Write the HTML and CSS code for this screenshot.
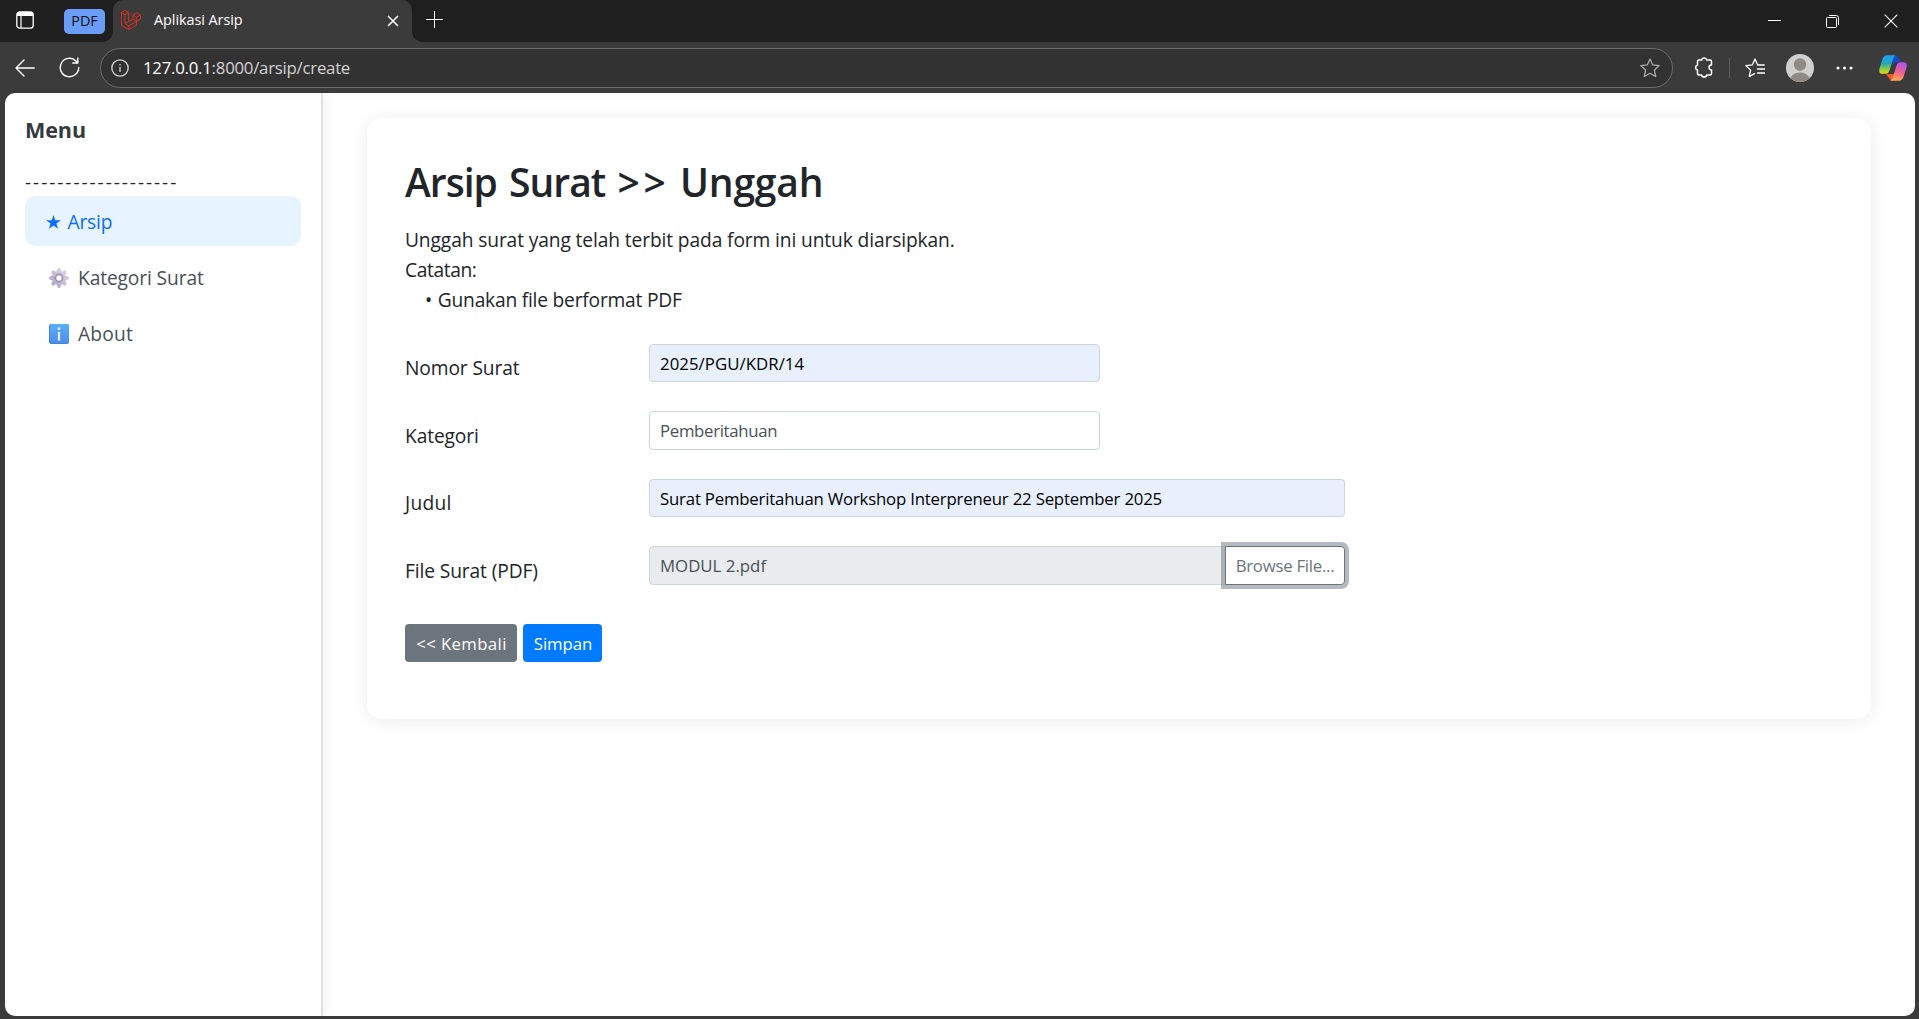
FILE: index.html
```
<!DOCTYPE html>
<html lang="id">
<head>
<meta charset="utf-8">
<title>Aplikasi Arsip</title>
<link rel="stylesheet" href="styles.css">
</head>
<body>
<div class="window">
  <header class="tabbar">
    <svg class="workspace" width="18" height="18" viewBox="0 0 18 18"><rect x=".8" y=".8" width="16.4" height="16.4" rx="3" fill="none" stroke="#fff" stroke-width="1.3"/><path d="M1 5V3.5A2.7 2.7 0 0 1 3.5 1h11A2.700 2.700 0 0 1 17 3.500V5z" fill="#fff"/><path d="M5 5v12" stroke="#fff" stroke-width="1.200"/></svg>
    <span class="group-chip">PDF</span>
    <div class="tab">
      <svg class="favicon" width="20" height="20" viewBox="0 0 20 20" fill="none" stroke="#d93025" stroke-width="1" stroke-linejoin="round"><path d="M.5 2.500 4 .5l3.700 2L4 4.600zM.5 2.500v13L8 19.500l7.500-4.200v-4M4 4.600v8.900l4 2.300v3.700M7.700 2.500v8.800M12 5l3.700-2.200L19.500 5l-3.800 2.200zM12 5v4.100l3.700 2.200L19.500 9V5M15.700 7.200v4.100M4 13.500l8-4.400M8 15.800l7.700-4.500"/></svg>
      <span class="tab-title">Aplikasi Arsip</span>
      <svg class="tab-close" width="12" height="12" viewBox="0 0 12 12" stroke="#fff" stroke-width="1.500"><path d="m1 1 10 10M11 1 1 11"/></svg>
    </div>
    <svg class="new-tab" width="17" height="17" viewBox="0 0 17 17" stroke="#fff" stroke-width="1"><path d="M8.500 0v17M0 8.500h17"/></svg>
    <div class="controls">
      <svg width="13" height="14" viewBox="0 0 13 14"><path d="M0 6.500h13" stroke="#fff" stroke-width="1"/></svg>
      <svg width="13" height="14" viewBox="0 0 13 14" fill="none" stroke="#fff"><rect x=".5" y="3.500" width="10" height="10" rx="1"/><path d="M3 1.500h7.200a2.300 2.300 0 0 1 2.300 2.300v7.200"/></svg>
      <svg width="14" height="14" viewBox="0 0 14 14" stroke="#fff" stroke-width="1.100"><path d="m.7.7 12.600 12.600M13.300.7.7 13.300"/></svg>
    </div>
  </header>

  <nav class="toolbar">
    <svg class="back" width="20" height="18" viewBox="0 0 20 18" fill="none" stroke="#fff" stroke-width="1.400" stroke-linecap="round" stroke-linejoin="round"><path d="M19.200 9H1M9 1 1 9l8 8"/></svg>
    <svg class="reload" width="21" height="21" viewBox="0 0 21 21" fill="none" stroke="#fff" stroke-width="1.400" stroke-linecap="round" stroke-linejoin="round"><path d="M19.700 10.500a9.200 9.200 0 1 1-2.800-6.600l1.800 1.800M18.800 1v5h-5"/></svg>
    <div class="address">
      <svg width="18" height="18" viewBox="0 0 18 18" fill="none" stroke="#d6d6d6" stroke-width="1.300"><circle cx="9" cy="9" r="8.200"/><path d="M9 8v5"/><path d="M9 5v1.600"/></svg>
      <span class="url">127.0.0.1<span class="url-path">:8000/arsip/create</span></span>
      <svg class="bookmark" width="20" height="20" viewBox="0 0 20 20" fill="none" stroke="#a9a9a9" stroke-width="1.300" stroke-linejoin="round"><path d="m10 1 2.700 5.900 6.500.7-4.800 4.400 1.300 6.500L10 15.300l-5.700 3.200L5.600 12 .8 7.600l6.500-.7z"/></svg>
    </div>
    <svg class="extensions" width="20" height="21" viewBox="0 0 20 21" fill="none" stroke="#fff" stroke-width="1.500" stroke-linejoin="round"><path d="M3.500 4.500Q3.500 3 5 3h2.600a2.600 2.600 0 0 1 5.100 0H16Q17.500 3 17.500 4.500V8a2.500 2.500 0 1 0 0 5v3.500Q17.500 18 16 18h-3.300a2.600 2.600 0 0 1-5.100 0H5q-1.500 0-1.500-1.500V13a2.600 2.600 0 0 1 0-5z"/></svg>
    <span class="divider"></span>
    <svg class="favorites" width="20" height="20" viewBox="0 0 20 20" fill="none" stroke="#fff" stroke-width="1.300" stroke-linecap="round" stroke-linejoin="round"><path d="M19.200 7h-6.500L10 1 7.300 6.900.8 7.600l4.800 4.500-1.300 6.400 5.200-2.900M12.500 11h7M12.500 15h7"/></svg>
    <svg class="avatar" width="28" height="28" viewBox="0 0 28 28"><clipPath id="disc"><circle cx="14" cy="14" r="14"/></clipPath><g clip-path="url(#disc)"><rect width="28" height="28" fill="#d2d0ce"/><circle cx="14" cy="10.500" r="6.200" fill="#8f8a86"/><ellipse cx="14" cy="26" rx="10" ry="7.500" fill="#8f8a86"/></g></svg>
    <svg class="more" width="17" height="4" viewBox="0 0 17 4" fill="#fff"><circle cx="2" cy="2" r="1.500"/><circle cx="8.500" cy="2" r="1.500"/><circle cx="15" cy="2" r="1.500"/></svg>
    <svg class="copilot" width="28" height="26" viewBox="0 0 28 26">
      <defs>
        <linearGradient id="cool" x1="0" y1="0" x2="0" y2="1"><stop offset="0" stop-color="#18a0f5"/><stop offset=".45" stop-color="#2aa5b8"/><stop offset=".75" stop-color="#8ccf45"/><stop offset="1" stop-color="#f5d30a"/></linearGradient>
        <linearGradient id="warm" x1=".6" y1="0" x2=".3" y2="1"><stop offset="0" stop-color="#b255ee"/><stop offset=".5" stop-color="#f2608c"/><stop offset="1" stop-color="#ffb04d"/></linearGradient>
      </defs>
      <path d="M13 .5h3.500q2.500 0 3.300 2.700l1.200 4h-3q-3 0-4 3z" fill="#1749c8"/>
      <path d="M7 19h8l2 6.300h-3.500q-3 0-4-3z" fill="#f4582c"/>
      <path d="M8 .3h9q-2 .7-3 4l-3.500 11q-1 3.500-4 3.500H3.500Q-.8 18.800.5 13.500l2.800-9Q4.700.3 8 .3z" fill="url(#cool)"/>
      <path d="M20 25.700h-9q2-.7 3-4l3.500-11q1-3.500 4-3.500h3q4.300 0 3 5.300l-2.800 9q-1.400 4.200-4.700 4.200z" fill="url(#warm)"/>
    </svg>
  </nav>

  <div class="page">
    <aside class="sidebar">
      <h2 class="menu-title">Menu</h2>
      <div class="rule">-------------------</div>
      <a class="item active"><svg width="15" height="14" viewBox="0 0 15 14"><path d="m7.500 0 1.800 5.200H15l-4.600 3.300 1.700 5.300-4.600-3.300-4.600 3.300 1.700-5.300L0 5.200h5.700z" fill="#0d6efd"/></svg><span class="t-arsip">Arsip</span></a>
      <a class="item"><svg width="20" height="20" viewBox="0 0 20 20"><defs><linearGradient id="gear" x1="1" y1="0" x2="0" y2="1"><stop offset="0" stop-color="#ded6e8"/><stop offset="1" stop-color="#b3a3c9"/></linearGradient></defs><g stroke="url(#gear)" stroke-width="3.800" stroke-linecap="round"><path d="M10 2v16.010M2 10h16.010M4.300 4.300l11.400 11.410M15.700 4.300 4.300 15.710"/></g><circle cx="10" cy="10" r="7.300" fill="url(#gear)"/><circle cx="10" cy="10" r="4.400" fill="#9d93a8"/><circle cx="10" cy="10" r="2.700" fill="#fff"/></svg><span class="t-kat">Kategori Surat</span></a>
      <a class="item"><svg width="20" height="20" viewBox="0 0 20 20"><defs><linearGradient id="info" x1="0" y1="0" x2="0" y2="1"><stop offset="0" stop-color="#58b0fa"/><stop offset="1" stop-color="#4a8ee8"/></linearGradient></defs><rect width="20" height="20" rx="2" fill="#4583d2"/><rect x="1" width="19" height="19" rx="2" fill="url(#info)"/><path d="M10 8v8.500" stroke="#f3e8ff" stroke-width="2.200"/><circle cx="10" cy="4.700" r="1.400" fill="#f3e8ff"/></svg><span class="t-about">About</span></a>
    </aside>

    <main class="content">
      <section class="card">
        <h1>Arsip Surat <span class="arrows">&gt;&gt;</span> <span class="last">Unggah</span></h1>
        <p class="lead">Unggah surat yang telah terbit pada form ini untuk diarsipkan.</p>
        <p class="note">Catatan:</p>
        <p class="bullet">• <span>Gunakan file berformat PDF</span></p>
        <form class="form">
          <div class="row"><label>Nomor Surat</label><div class="field short filled"><span class="v-no">2025/PGU/KDR/14</span></div></div>
          <div class="row"><label>Kategori</label><div class="field short"><span class="v-kat">Pemberitahuan</span></div></div>
          <div class="row"><label class="l-judul">Judul</label><div class="field filled"><span class="v-judul">Surat Pemberitahuan Workshop Interpreneur 22 September 2025</span></div></div>
          <div class="row"><label>File Surat (PDF)</label><div class="group"><div class="field locked"><span class="v-file">MODUL 2.pdf</span></div><div class="browse">Browse File...</div></div></div>
          <div class="actions"><a class="btn gray">&lt;&lt; Kembali</a><a class="btn blue">Simpan</a></div>
        </form>
      </section>
    </main>
  </div>
</div>
</body>
</html>
```
FILE: styles.css
```
* { box-sizing: border-box; }
body {
  margin: 0;
  font-family: "Open Sans", sans-serif;
  font-size: 19.2px;
  line-height: 30px;
  color: #212529;
  background: #3b3b3b;
}
h1, h2, p { margin: 0; }
svg { display: block; flex: none; }
.window { display: flex; flex-direction: column; height: 1019px; overflow: hidden; }

/* Tab strip */
.tabbar { display: flex; height: 42px; background: #1f1f1f; color: #fff; font-size: 14.4px; line-height: 20px; }
.workspace { margin: 11px 0 0 16px; }
.group-chip {
  margin: 9px 0 0 30px; width: 41px; height: 25px; border-radius: 5px;
  background: #699df8; color: #111; text-align: center; line-height: 23px;
}
.tab {
  position: relative; display: flex; width: 299px; height: 42px; margin-left: 8px;
  background: #3b3b3b; border-radius: 10px 10px 0 0;
}
.tab::before, .tab::after {
  content: ""; position: absolute; bottom: 0; width: 10px; height: 10px;
}
.tab::before { left: -10px; background: radial-gradient(circle at 0 0, transparent 9.5px, #3b3b3b 10px); }
.tab::after { right: -10px; background: radial-gradient(circle at 100% 0, transparent 9.5px, #3b3b3b 10px); }
.favicon { margin: 10px 0 0 8px; }
.tab-title { margin: 10px 0 0 13px; letter-spacing: -.003em; }
.tab-close { margin: 15px 13px 0 auto; }
.new-tab { margin: 11px 0 0 14px; }
.controls { display: flex; gap: 45px; margin: 14px 21px 0 auto; }

/* Address row */
.toolbar { display: flex; align-items: center; height: 51px; flex: none; padding-left: 15px; }
.reload { margin-left: 24px; }
.address {
  display: flex; align-items: center; width: 1573px; height: 40px; margin-left: 20px; padding: 0 12px 0 10px;
  background: #323232; border: 1px solid #6c6c6c; border-radius: 20px;
}
.url { margin: 0 auto 0 14px; font-size: 16.8px; letter-spacing: -.0145em; color: #fff; }
.url-path { color: #d2d2d2; }
.extensions { margin-left: 21px; }
.divider { width: 1px; height: 20px; margin-left: 15px; background: #5c5c5c; }
.favorites { margin-left: 15px; }
.avatar { margin-left: 21px; }
.more { margin-left: 22px; }
.copilot { margin-left: 26px; }

/* Page */
.page { display: flex; width: 1910px; height: 922.500px; margin-left: 5px; background: #fff; border-radius: 10px; overflow: hidden; }
.sidebar {
  width: 318px; padding: 22px 20px 0; border-right: 2px solid #dee2e6;
  box-shadow: 2px 0 12px rgba(0, 0, 0, .06);
}
.menu-title { font-size: 21.5px; line-height: 30px; color: #343a40; letter-spacing: -.003em; }
.rule { margin-top: 30px; height: 21px; line-height: 14px; letter-spacing: 1.950px; font-size: 19px; white-space: nowrap; }
.item { display: flex; align-items: center; height: 50px; margin-bottom: 6px; padding-left: 24px; color: #495057; border-radius: 10px; }
.item.active { padding-left: 21px; background: #e7f3ff; color: #0d6efd; }
.item svg { margin-top: 1px; }
.item span { margin: 2px 0 0 9px; }
.item .t-arsip { margin-left: 6.500px; letter-spacing: -.01em; }
.t-kat { letter-spacing: -.006em; }
.t-about { letter-spacing: .01em; }

.content { flex: 1; padding: 25px 44px 0; }
.card {
  height: 601px; padding: 39px 38px; border-radius: 15px;
  box-shadow: 0 2px 18px rgba(0, 0, 0, .08);
}
h1 { padding-top: 1px; font-size: 39px; font-weight: 600; line-height: 48px; letter-spacing: -.025em; margin-bottom: 18.500px; word-spacing: 3px; }
.arrows { letter-spacing: .1em; }
.last { margin-left: -2px; letter-spacing: -.004em; }
.lead { letter-spacing: -.006em; }
.note { letter-spacing: -.02em; }
.bullet { padding-left: 20px; }
.bullet span { margin-left: .6px; letter-spacing: -.011em; }

/* Upload form */
.form { padding-top: 29.200px; }
.row { display: flex; height: 67.500px; }
label { width: 244px; padding-top: 9.300px; letter-spacing: -.006em; }
.row:nth-child(even) label { padding-top: 9.900px; }
.l-judul { letter-spacing: .015em; }
.field {
  width: 696px; height: 38.500px; padding-left: 10px; border: 1px solid #ced4da; border-radius: 4px;
  background: #fff; color: #495057; font-size: 16.8px; line-height: 37.200px; white-space: nowrap;
}
.field.short { width: 451px; }
.field.filled { background: #e8f0fe; color: #000; }
.group { display: flex; height: 38.500px; }
.group .field { width: 577px; margin-right: -1px; background: #e9ecef; border-radius: 4px 0 0 4px; }
.browse {
  width: 120px; position: relative; border: 1px solid #6c757d; border-radius: 0 4px 4px 0; background: #fff;
  box-shadow: 0 0 0 4px rgba(108, 117, 125, .5);
  color: #6c757d; font-size: 16.8px; line-height: 37.200px; text-align: center; letter-spacing: -.0156em; white-space: nowrap;
}
.v-no { letter-spacing: .003em; }
.v-kat { letter-spacing: -.019em; }
.v-judul { letter-spacing: -.0118em; }
.v-file { letter-spacing: .001em; }
.actions { display: flex; gap: 6px; padding-top: 10.300px; }
.btn { height: 38px; border-radius: 4px; color: #fff; font-size: 16.8px; line-height: 39.500px; text-align: center; }
.gray { width: 112px; padding-left: 1px; background: #6c757d; letter-spacing: .022em; }
.blue { width: 79px; padding-left: 1px; background: #007bff; letter-spacing: -.004em; }
```
